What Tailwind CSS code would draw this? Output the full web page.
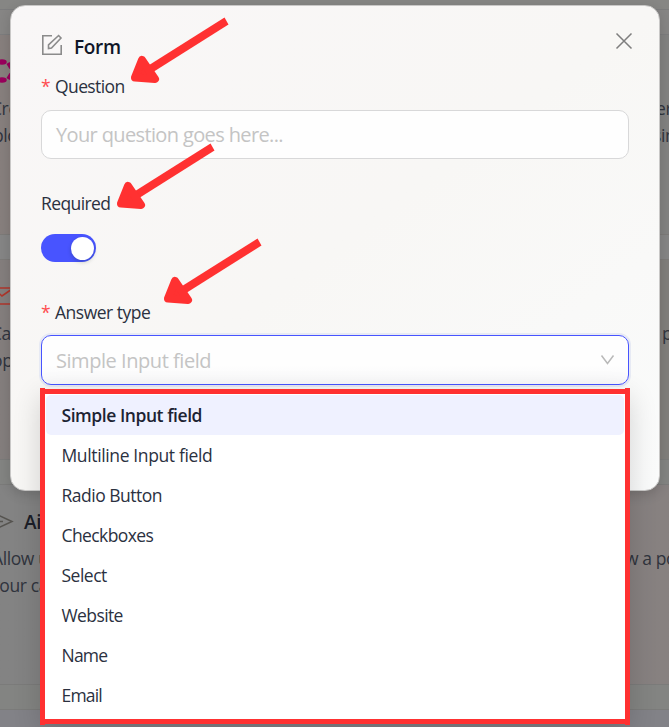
<!DOCTYPE html>
<html lang="en">
<head>
<meta charset="utf-8">
<title>Form</title>
<script src="https://cdn.jsdelivr.net/npm/@tailwindcss/browser@4"></script>
</head>
<body class="relative h-[727px] w-[669px] overflow-hidden bg-[#848282] font-['Open_Sans','Noto_Sans',sans-serif] text-[17.5px] tracking-[-0.4px] text-[#2b313f]">

<!-- Dimmed page behind the dialog -->
<div class="flex h-[727px] flex-col text-[#30343d]">
  <div class="h-[9px] shrink-0 bg-[#868684]"></div>
  <div class="h-[26px] shrink-0 border-y border-[#7c7c7d] bg-[#868584]"></div>
  <div class="flex h-[199px] shrink-0 justify-between overflow-hidden bg-linear-to-r from-[#877f7d] to-[#828281] pt-[24px]">
    <div class="w-[60px]">
      <svg class="block h-[26px] w-[20px]" viewBox="0 0 20 26" fill="none" stroke="#99005c" stroke-width="3.5"><ellipse cx="2" cy="3" rx="3" ry="1"/><ellipse cx="2" cy="21" rx="3" ry="1"/><path d="M8 4l3 5M8 20l3-5"/></svg>
      <p class="-ml-[9px] pt-[10px] leading-[27px] whitespace-nowrap">Crea<br><span class="ml-[2px]">block</span></p>
    </div>
    <p class="w-[13px] pt-[36px] leading-[27px] whitespace-nowrap">er<br><span class="-ml-[3px]">sin</span></p>
  </div>
  <div class="h-[26px] shrink-0 border-y border-[#7c7a78] bg-[#858585]"></div>
  <div class="flex h-[199px] shrink-0 justify-between overflow-hidden bg-linear-to-r from-[#847e7d] to-[#817e7b] pt-[26px]">
    <div class="w-[60px]">
      <svg class="block h-[20px] w-[20px]" viewBox="0 0 20 20" fill="none" stroke="#af362b" stroke-width="1.6"><path d="M-8 2h21v16H-8zM-6 3L2 10L12 3"/></svg>
      <p class="-ml-[9px] pt-[14px] leading-[27px] whitespace-nowrap">Can<br><span class="ml-[1px]">opt</span></p>
    </div>
    <p class="w-[7px] pt-[34px] leading-[27px]">p</p>
  </div>
  <div class="h-[26px] shrink-0 border-y border-[#7b7b7a] bg-[#838482]"></div>
  <div class="flex h-[199px] shrink-0 justify-between overflow-hidden bg-linear-to-r from-[#838383] from-40% to-[#878180] pt-[24px]">
    <div class="w-[100px] whitespace-nowrap">
      <div class="flex h-[26px] items-center">
        <svg class="h-[20px] w-[24px]" viewBox="0 0 24 20" fill="none" stroke="#55534f" stroke-width="1.5"><path d="M-5 3L0 4L12 9.500L0 15L-5 16M0 9.500h3"/></svg>
        <span class="text-[19px] font-semibold text-[#1b1e28]">Ai</span>
      </div>
      <p class="-ml-[8px] pt-[10px] leading-[27px]">Allow u<br><span class="ml-[-1px]">your ca</span></p>
    </div>
    <p class="w-[44px] pt-[36px] leading-[27px] whitespace-nowrap">w a po</p>
  </div>
  <div class="h-[26px] shrink-0 border-y border-[#7b7b7a] bg-[#838482]"></div>
  <div class="grow bg-[#828287]"></div>
</div>

<!-- Dialog -->
<section class="absolute top-[5px] left-[10px] h-[486px] w-[650px] rounded-[15px] border border-[#c9c8c7] bg-linear-to-br from-[#f9f7f7] via-[#f8f7f5] to-[#fafbfb] px-[30px] pt-[26px] shadow-[0_4px_12px_rgba(0,0,0,0.15)]">
  <header class="flex h-[30px] items-center">
    <svg class="relative -top-[2px] h-[22px] w-[22px]" viewBox="0 0 22 22" fill="none" stroke="#8b8b8b" stroke-width="1.6"><path d="M11 1.800H1.800V20.200H20.200V11"/><path d="M7.500 14.500V10.800L17.600 1.500L20 4L10.500 14.100Z"/></svg>
    <h1 class="ml-[11px] text-[19px] leading-[30px] font-semibold tracking-[-0.3px] text-[#101628]">Form</h1>
    <svg class="relative -top-[6px] -mr-[4px] ml-auto h-[18px] w-[18px]" viewBox="0 0 18 18" fill="none" stroke="#7e7e7e" stroke-width="1.5"><path d="M1.500 1.500L16.500 16.500M16.500 1.500L1.500 16.500"/></svg>
  </header>
  <div class="mt-[11px] flex h-[26px] items-center"><span class="w-[14px] text-[#ff4d4f]">*</span><label class="tracking-[-0.6px]">Question</label></div>
  <div class="mt-[11px] flex h-[49px] items-center rounded-[10px] border border-[#d8d8d9] bg-[#fefefe] px-[14px] pt-px text-[20px] tracking-[-0.63px] text-[#c4c4c4]"><span>Your question goes here...</span></div>
  <div class="mt-[31px] flex h-[26px] items-center"><label class="tracking-[-0.6px]">Required</label></div>
  <div class="mt-[18px] flex h-[28px] w-[55px] items-center justify-end rounded-full bg-[#4854ff] pr-[2px]"><span class="size-[23px] rounded-full bg-white shadow-[0_2px_4px_rgba(0,35,11,0.2)]"></span></div>
  <div class="mt-[37px] flex h-[26px] items-center"><span class="w-[14px] text-[#ff4d4f]">*</span><label class="tracking-[-0.5px]">Answer type</label></div>
  <div class="mt-[10px] flex h-[50px] items-center justify-between rounded-[10px] border border-[#4854ff] bg-linear-to-b from-[#fefefe] from-60% to-[#f8f8f9] pr-[13px] pl-[14px] text-[20px] tracking-[-0.45px] text-[#c4c4c4] shadow-[0_0_0_2px_#e7eaf4]"><span class="pt-px">Simple Input field</span>
    <svg class="h-[12px] w-[15px]" viewBox="0 0 15 12" fill="none" stroke="#b9b9b9" stroke-width="1.5"><path d="M1.500 1.500L7.500 9.500L13.500 1.500"/></svg>
  </div>
</section>

<!-- Options menu -->
<div class="absolute top-[389px] left-[40px] h-[335px] w-[590px] border-y-[5px] border-[#ff3131] bg-white px-[5px] shadow-[0_8px_26px_rgba(0,0,0,0.16)]">
  <div class="absolute -top-[6px] left-0 h-[337px] w-[5px] bg-[#ff3131]"></div>
  <div class="absolute -top-[6px] right-0 h-[337px] w-[5px] bg-[#ff3131]"></div>
  <ul class="flex flex-col pt-[1px]">
    <li class="mx-px flex h-[40px] items-center rounded-[5px] bg-[#eff1ff] pt-px pl-[15.5px] font-semibold tracking-[-0.45px] text-[#1c2333]"><span>Simple Input field</span></li>
    <li class="flex h-[40px] items-center pt-px pl-[16.5px]"><span class="tracking-[-0.37px]">Multiline Input field</span></li>
    <li class="flex h-[40px] items-center pt-px pl-[16.5px]"><span class="tracking-[-0.5px]">Radio Button</span></li>
    <li class="flex h-[40px] items-center pt-px pl-[16.5px]"><span class="tracking-[-0.6px]">Checkboxes</span></li>
    <li class="flex h-[40px] items-center pt-px pl-[16.5px]"><span class="tracking-[-0.5px]">Select</span></li>
    <li class="flex h-[40px] items-center pt-px pl-[16.5px]"><span class="tracking-[-0.6px]">Website</span></li>
    <li class="flex h-[40px] items-center pt-px pl-[16.5px]"><span class="tracking-[-0.8px]">Name</span></li>
    <li class="flex h-[40px] items-center pt-px pl-[16.5px]"><span class="tracking-[-0.8px]">Email</span></li>
  </ul>
</div>

<!-- Annotation arrows -->
<svg class="absolute inset-0 h-[727px] w-[669px]" viewBox="0 0 669 727" fill="#ff3131">
  <defs><g id="arrow"><path d="M94.500 -62.500L98.500 -55.500L20 -6L16 -13Z"/><path d="M5 -2.500L12 -20L25 -1Z" stroke="#ff3131" stroke-width="8" stroke-linejoin="round"/></g></defs>
  <use href="#arrow" x="130" y="80"/>
  <use href="#arrow" x="116" y="206"/>
  <use href="#arrow" x="163" y="301"/>
</svg>
</body>
</html>
